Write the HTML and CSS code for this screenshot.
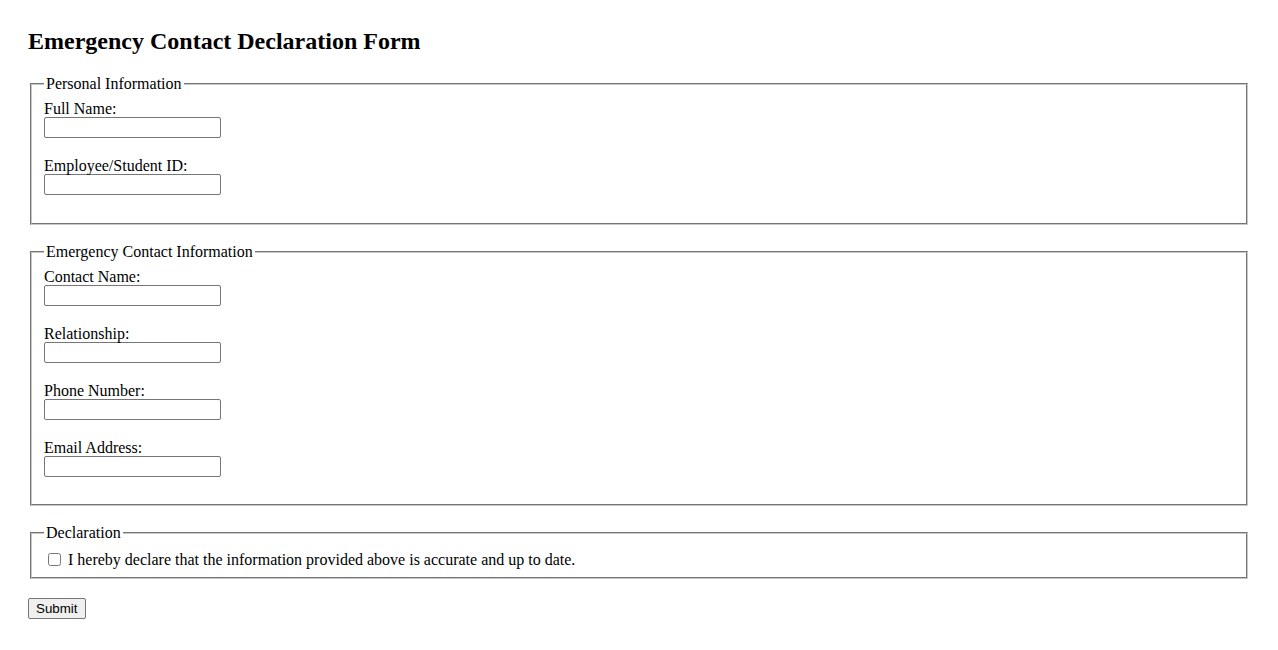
FILE: index.html
```html
<!DOCTYPE html>
<html lang="en">
<head>
  <meta charset="UTF-8">
  <meta name="viewport" content="width=device-width, initial-scale=1.0">
  <title>Emergency Contact Declaration Form</title>
  <link rel="stylesheet" href="styles.css">
</head>

<body>
  <h2>Emergency Contact Declaration Form</h2>

  <form id="emergency-form" class="emergency-form">
    <fieldset class="personal">
      <legend>Personal Information</legend>
      <div class="form-group">
        <label for="full-name">Full Name:</label>
        <input type="text" id="full-name" name="full-name">
      </div>
      <div class="form-group">
        <label for="emp-id">Employee/Student ID:</label>
        <input type="text" id="emp-id" name="emp-id">
      </div>
    </fieldset>

    <fieldset>
      <legend>Emergency Contact Information</legend>
      <div class="form-group">
        <label for="contact-name">Contact Name:</label>
        <input type="text" id="contact-name" name="contact-name">
      </div>
      <div class="form-group">
        <label for="relationship">Relationship:</label>
        <input type="text" id="relationship" name="relationship">
      </div>
      <div class="form-group">
        <label for="phone">Phone Number:</label>
        <input type="tel" id="phone" name="phone">
      </div>
      <div class="form-group">
        <label for="email">Email Address:</label>
        <input type="email" id="email" name="email">
      </div>
    </fieldset>

    <fieldset class="declaration">
      <legend>Declaration</legend>
      <label class="check-label">
        <input type="checkbox" id="declare" name="declare">
        I hereby declare that the information provided above is accurate and up to date.
      </label>
    </fieldset>

    <button type="submit" class="submit-btn">Submit</button>
  </form>
</body>
</html>
```

FILE: styles.css
```css
body {
  margin: 0;
  padding: 27px 28px;
  font-family: "Liberation Serif", "Times New Roman", serif;
  font-size: 16px;
  color: #000;
  background: #fff;
}

h2 {
  margin: 0 0 20px;
  font-size: 24px;
  font-weight: bold;
  line-height: 28px;
}

fieldset {
  margin: 0 2px 18px;
  padding: 7px 12px 8px;
  border: 2px groove #c8c8c8;
}

fieldset.personal {
  padding-bottom: 9px;
}

legend {
  padding: 0 2px;
  line-height: 18px;
}

.form-group {
  margin-bottom: 19px;
}

.form-group label {
  display: block;
  line-height: 17px;
}

.form-group input {
  display: block;
  width: 177px;
  height: 21px;
  box-sizing: border-box;
  margin: 0;
  padding: 1px 2px;
  border: 1px solid #767676;
  border-radius: 2px;
  font-family: "Liberation Sans", Arial, sans-serif;
  font-size: 13.33px;
}

.declaration {
  padding-top: 8px;
  padding-bottom: 8px;
}

.check-label {
  display: block;
  line-height: 19px;
}

.check-label input {
  margin: 3px 3px 3px 4px;
  width: 13px;
  height: 13px;
  vertical-align: -1px;
}

.submit-btn {
  display: block;
  margin-top: 19px;
  height: 21px;
  padding: 1px 8px 1px 7px;
  font-family: "Liberation Sans", Arial, sans-serif;
  font-size: 13.33px;
  color: #000;
  background: #efefef;
  border: 1px solid #767676;
  border-radius: 2px;
}
```
